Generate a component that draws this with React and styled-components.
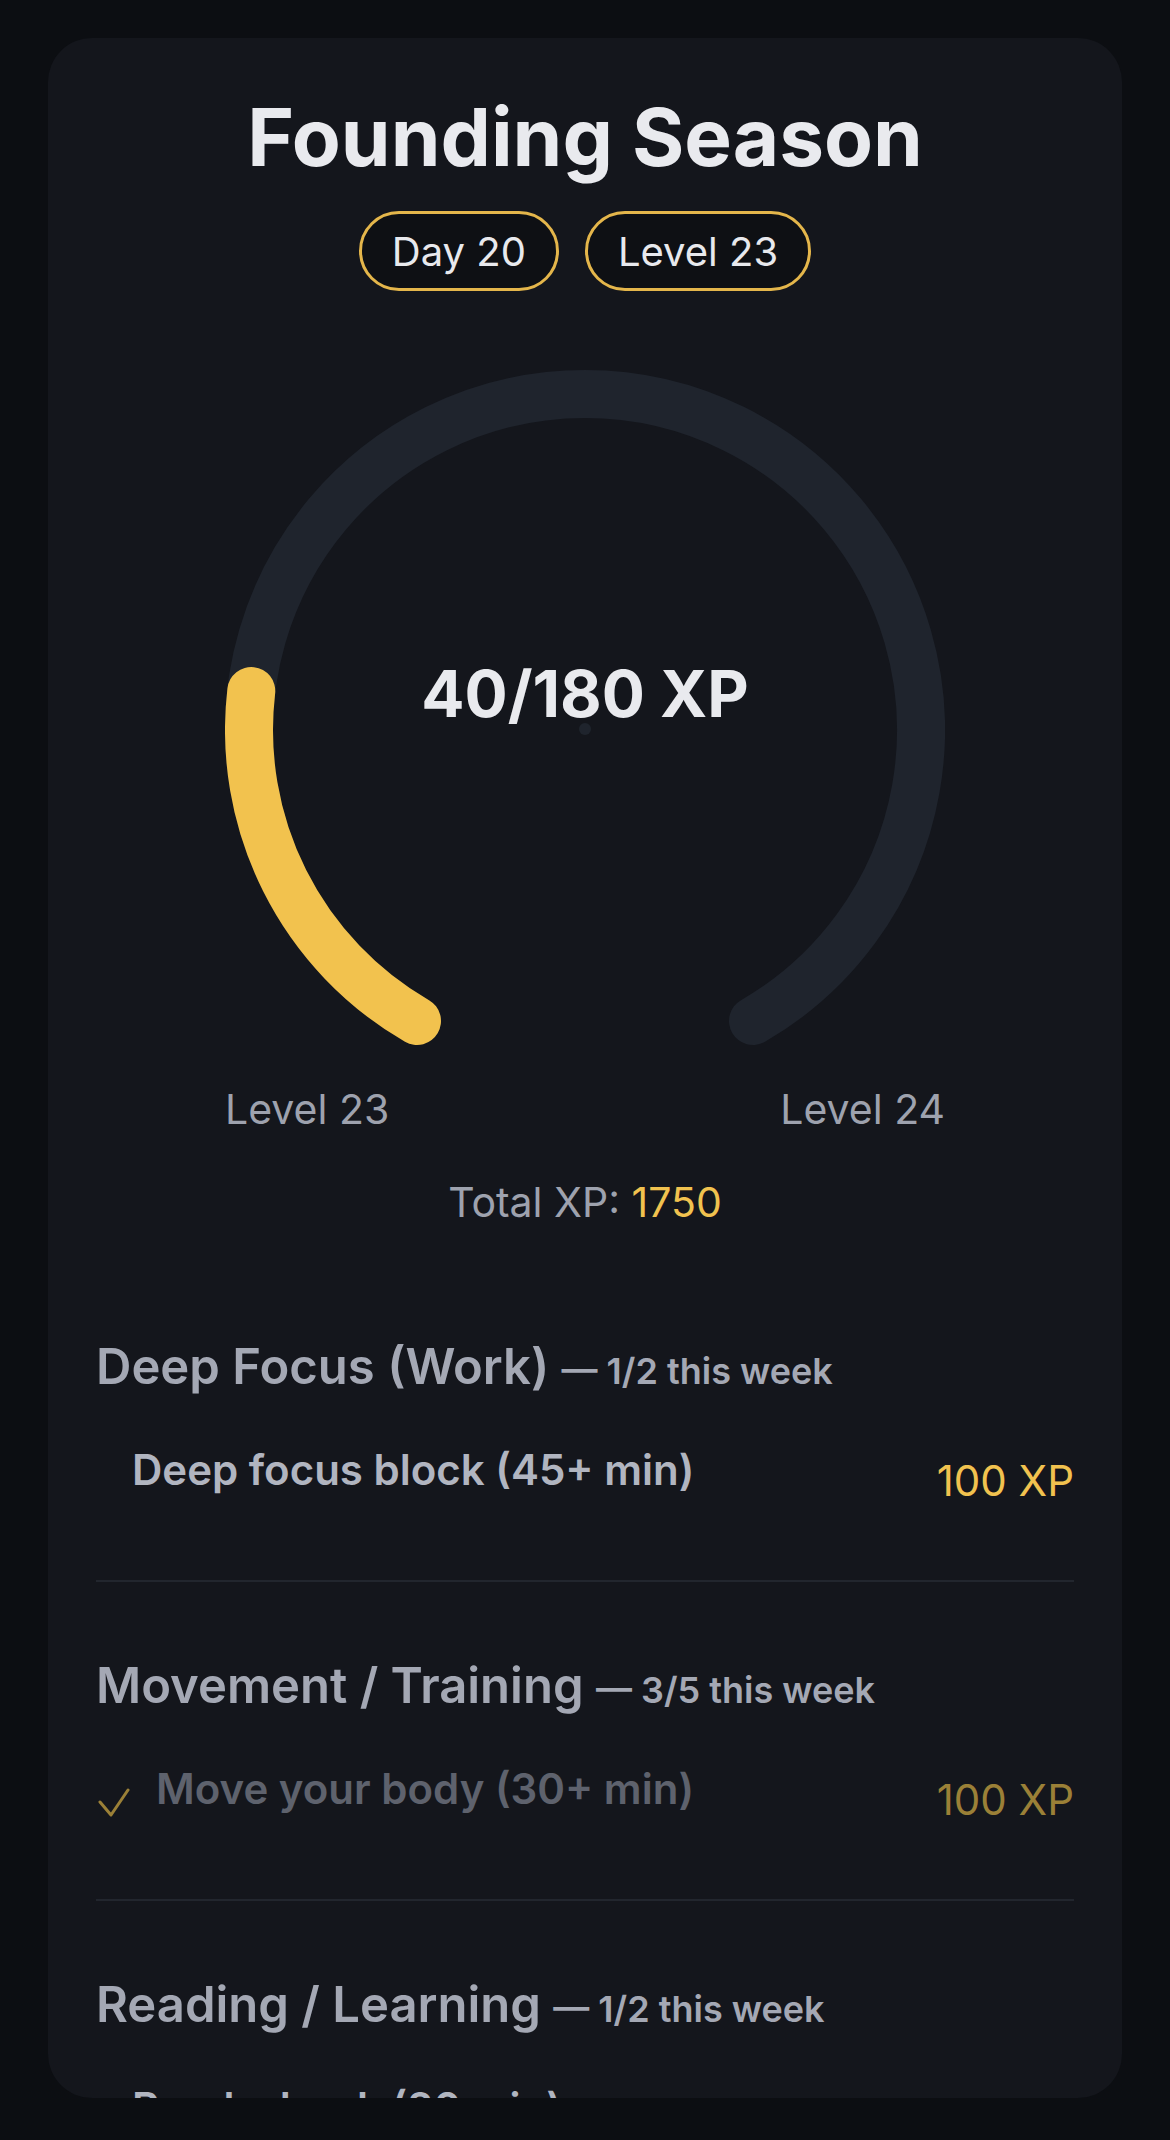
import React from 'react';
import styled, { createGlobalStyle } from 'styled-components';

const GlobalStyle = createGlobalStyle`
  html, body {
    margin: 0;
    padding: 0;
    background: #0c0e12;
  }
  * {
    box-sizing: border-box;
  }
`;

const Page = styled.div`
  height: 2140px;
  padding: 38px 48px 42px;
  background: #0c0e12;
  font-family: Inter, 'Noto Sans', sans-serif;
`;

const Card = styled.div`
  height: 100%;
  background: #14161c;
  border-radius: 44px;
  overflow: hidden;
  padding: 59px 48px 0;
  display: flex;
  flex-direction: column;
  align-items: center;
`;

const Title = styled.h1`
  margin: 0;
  font-size: 80px;
  line-height: 1;
  font-weight: 700;
  color: #e9eaee;
`;

const PillRow = styled.div`
  display: flex;
  gap: 26px;
  margin-top: 34px;
`;

const Pill = styled.div`
  height: 80px;
  padding: 0 30px;
  border: 3px solid #e4b64b;
  border-radius: 40px;
  background: #0e1014;
  color: #e8e9ed;
  font-size: 40px;
  display: flex;
  align-items: center;
`;

const Gauge = styled.div`
  position: relative;
  width: 720px;
  height: 680px;
  margin-top: 79px;
`;

const GaugeValue = styled.div`
  position: absolute;
  top: 292px;
  left: 0;
  right: 0;
  text-align: center;
  font-size: 64px;
  line-height: 1;
  font-weight: 700;
  color: #e9eaee;
`;

const LevelRow = styled.div`
  width: 720px;
  display: flex;
  justify-content: space-between;
  margin-top: 35px;
  font-size: 41px;
  line-height: 48px;
  color: #9ea2ae;
`;

const TotalXp = styled.div`
  margin-top: 45px;
  font-size: 41px;
  line-height: 48px;
  color: #9ea2ae;
`;

const Gold = styled.span`
  color: #f1c24f;
`;

const Section = styled.section`
  align-self: stretch;
  padding: 75px 0;
  border-bottom: 2px solid #22262e;
  &:first-of-type {
    margin-top: 37px;
  }
`;

const Heading = styled.h2`
  margin: 0;
  font-size: 49px;
  line-height: 58px;
  font-weight: 600;
  color: #a4a8b4;
  white-space: nowrap;
`;

const HeadingNote = styled.span`
  font-size: 36px;
  line-height: 1;
`;

const Task = styled.div`
  display: flex;
  align-items: flex-start;
  margin-top: 50px;
  padding-left: ${(p) => (p.$done ? '2px' : '36px')};
`;

const Check = styled.svg`
  flex: none;
  width: 32px;
  height: 30px;
  margin: 23px 26px 0 0;
`;

const TaskName = styled.div`
  flex: 1;
  font-size: 42px;
  line-height: 48px;
  font-weight: 600;
  color: ${(p) => (p.$done ? '#5e626d' : '#b1b5c0')};
`;

const TaskXp = styled.div`
  margin-top: 11px;
  font-size: 42px;
  line-height: 48px;
  color: ${(p) => (p.$done ? '#9b8037' : '#f1c24f')};
`;

const CX = 360;
const CY = 360;
const R = 336;

const pointAt = (deg) => {
  const a = (deg * Math.PI) / 180;
  return [CX + R * Math.cos(a), CY + R * Math.sin(a)];
};

const arc = (from, to) => {
  const [x1, y1] = pointAt(from);
  const [x2, y2] = pointAt(to);
  const large = to - from > 180 ? 1 : 0;
  return `M ${x1} ${y1} A ${R} ${R} 0 ${large} 1 ${x2} ${y2}`;
};

const Ring = ({ value, max }) => {
  const start = 120;
  const end = start + (300 * value) / max;
  return (
    <svg width="720" height="680" viewBox="0 0 720 680">
      <path d={arc(start, 420)} fill="none" stroke="#1f242d" strokeWidth="48" strokeLinecap="round" />
      <path d={arc(start, end)} fill="none" stroke="#f2c24e" strokeWidth="48" strokeLinecap="round" />
      <circle cx={CX} cy={CY - 1} r="6" fill="#1f242d" />
    </svg>
  );
};

const sections = [
  {
    name: 'Deep Focus (Work)',
    note: '1/2 this week',
    tasks: [{ name: 'Deep focus block (45+ min)', xp: 100, done: false }],
  },
  {
    name: 'Movement / Training',
    note: '3/5 this week',
    tasks: [{ name: 'Move your body (30+ min)', xp: 100, done: true }],
  },
  {
    name: 'Reading / Learning',
    note: '1/2 this week',
    tasks: [{ name: 'Read a book (20 min)', xp: 100, done: false }],
  },
];

export default function App() {
  return (
    <Page>
      <GlobalStyle />
      <Card>
        <Title>Founding Season</Title>
        <PillRow>
          <Pill>Day 20</Pill>
          <Pill>Level 23</Pill>
        </PillRow>

        <Gauge>
          <Ring value={40} max={180} />
          <GaugeValue>40/180 XP</GaugeValue>
        </Gauge>

        <LevelRow>
          <span>Level 23</span>
          <span>Level 24</span>
        </LevelRow>

        <TotalXp>
          Total XP: <Gold>1750</Gold>
        </TotalXp>

        {sections.map((s) => (
          <Section key={s.name}>
            <Heading>
              {s.name} <HeadingNote>— {s.note}</HeadingNote>
            </Heading>
            {s.tasks.map((t) => (
              <Task key={t.name} $done={t.done}>
                {t.done && (
                  <Check viewBox="0 0 32 30">
                    <polyline
                      points="2,14 13,27 30,2"
                      fill="none"
                      stroke="#9b8037"
                      strokeWidth="3"
                      strokeLinecap="round"
                      strokeLinejoin="round"
                    />
                  </Check>
                )}
                <TaskName $done={t.done}>{t.name}</TaskName>
                <TaskXp $done={t.done}>{t.xp} XP</TaskXp>
              </Task>
            ))}
          </Section>
        ))}
      </Card>
    </Page>
  );
}
